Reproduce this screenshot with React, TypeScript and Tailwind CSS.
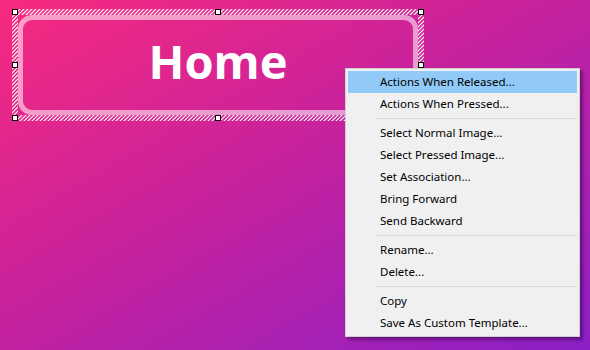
const handles: [number, number][] = [
  [3, 3], [206, 3], [409, 3],
  [3, 56], [409, 56],
  [3, 109], [206, 109], [409, 109],
];

type Entry = { label: string } | 'sep';

const menu: Entry[] = [
  { label: 'Actions When Released...' },
  { label: 'Actions When Pressed...' },
  'sep',
  { label: 'Select Normal Image...' },
  { label: 'Select Pressed Image...' },
  { label: 'Set Association...' },
  { label: 'Bring Forward' },
  { label: 'Send Backward' },
  'sep',
  { label: 'Rename...' },
  { label: 'Delete...' },
  'sep',
  { label: 'Copy' },
  { label: 'Save As Custom Template...' },
];

function Selection() {
  return (
    <svg className="absolute left-0 top-0" width="412" height="112" viewBox="0 0 412 112">
      <defs>
        <pattern id="hatch" patternUnits="userSpaceOnUse" width="4" height="4">
          <path d="M-1 1L1 -1M0 4L4 0M3 5L5 3" stroke="#ffffff" strokeWidth="1.2" />
        </pattern>
      </defs>
      <path
        d="M0 0H412V112H0Z M6 6V106H406V6Z"
        fill="url(#hatch)"
        fillRule="evenodd"
      />
      {handles.map(([x, y], i) => (
        <rect key={i} x={x - 2.5} y={y - 2.5} width="5" height="5" fill="#fff" stroke="#000" strokeWidth="1" />
      ))}
    </svg>
  );
}

export default function App() {
  return (
    <div className="relative h-[350px] w-[590px] overflow-hidden bg-[linear-gradient(150deg,#f72a7e_0%,#c8229c_45%,#8b20c6_100%)]">
      <div className="relative ml-[12px] mt-[9px] h-[112px] w-[412px] p-[6px]">
        <div className="flex h-[100px] w-[400px] items-center justify-center rounded-[14px] border-[5px] border-white/55 pb-[8px]">
          <span className="font-['Open_Sans',sans-serif] text-[47px] font-bold leading-none text-white">
            Home
          </span>
        </div>
        <Selection />
      </div>

      <div className="absolute left-[345px] top-[68px] w-[235px] border border-[#cfcfcf] bg-[#f0f0f0] px-[2px] pb-[2px] pt-[2px] font-['Noto_Sans',sans-serif] text-[11.5px] text-black shadow-[3px_3px_3px_rgba(40,0,60,0.45)]">
        {menu.map((e, i) =>
          e === 'sep' ? (
            <div key={i} className="flex h-[7px] items-center pl-[28px]">
              <div className="h-px w-full bg-[#d7d7d7]" />
            </div>
          ) : (
            <div
              key={i}
              className={`flex h-[22px] items-center pl-[32px] ${i === 0 ? 'bg-[#91c9f7]' : ''}`}
            >
              {e.label}
            </div>
          )
        )}
      </div>
    </div>
  );
}
